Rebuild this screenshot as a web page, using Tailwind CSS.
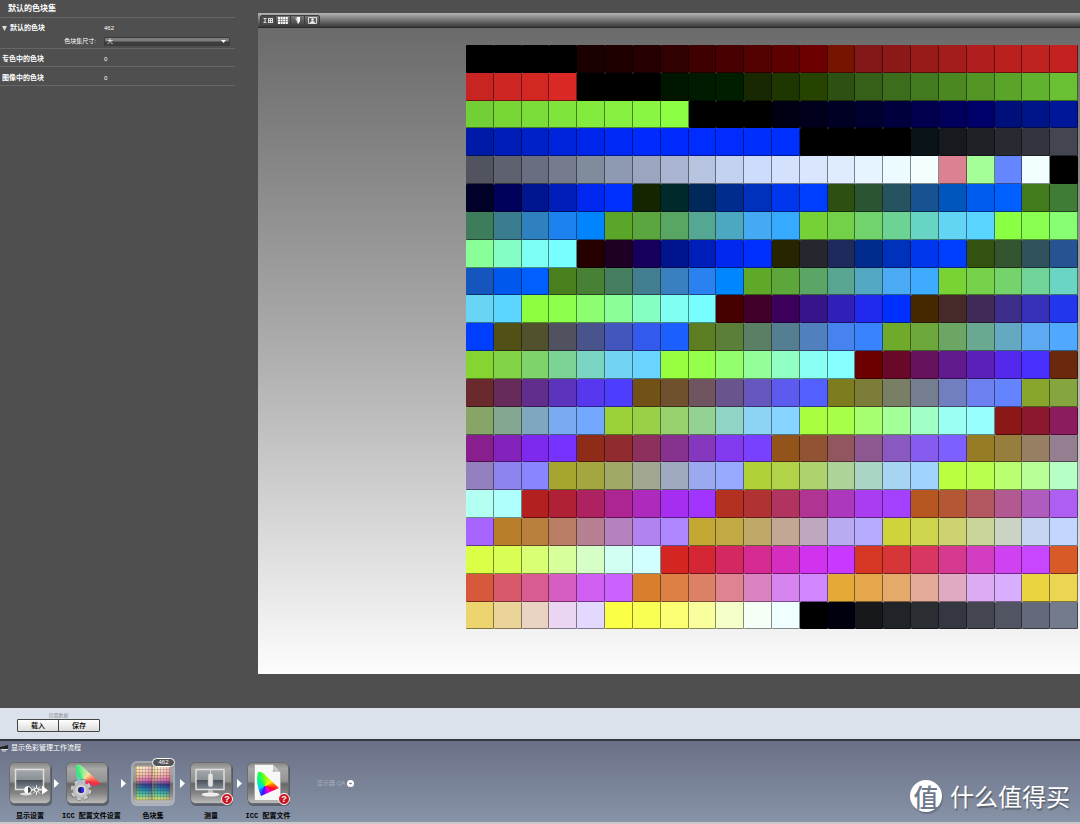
<!DOCTYPE html>
<html lang="zh-CN">
<head>
<meta charset="utf-8">
<meta name="viewport" content="width=device-width, initial-scale=1">
<title>默认的色块集</title>
<script src="https://cdn.jsdelivr.net/npm/@tailwindcss/browser@4"></script>
</head>
<body class="flex min-h-screen flex-col bg-[#4f4f4f] font-['Liberation_Sans','Noto_Sans_CJK_SC',sans-serif] text-[7px] leading-[10px] text-white">

<main class="flex flex-1 items-start">
  <aside class="w-[258px] shrink-0 pr-[23px]">
    <h1 class="border-b border-[#666] pt-1 pb-[3px] pl-2 text-[8px] leading-[10px] font-bold">默认的色块集</h1>
    <section class="border-b border-[#666] pt-[5px] pb-[2px]">
      <div class="flex items-center">
        <button class="flex w-[104px] items-center gap-[3px] pl-[2px] font-bold" aria-expanded="true">
          <svg class="size-[5px]" viewBox="0 0 5 5"><path d="M0 0h5L2.500 5z" fill="#ddd"/></svg>默认的色块
        </button>
        <span class="text-[6px]">462</span>
      </div>
      <div class="mt-[3px] flex items-center">
        <label for="size" class="w-[104px] pr-2 text-right text-[6px]">色块集尺寸:</label>
        <div class="relative mr-[5px] flex-1">
          <select id="size" class="block h-[9px] w-full appearance-none rounded-[1px] border border-[#3a3a3a] bg-linear-to-b from-[#7d7d7d] from-40% to-[#3d3d3d] to-60% pl-[2px] text-[6px] leading-[7px] text-white"><option>大</option></select>
          <svg class="pointer-events-none absolute top-[3px] right-1 h-[3px] w-[5px]" viewBox="0 0 5 3"><path d="M0 0h5L2.500 3z" fill="#fff"/></svg>
        </div>
      </div>
    </section>
    <section class="flex items-center border-b border-[#666] pt-[5px] pb-[2px]">
      <h2 class="w-[104px] pl-[2px] font-bold">专色中的色块</h2><span class="text-[6px]">0</span>
    </section>
    <section class="flex items-center border-b border-[#666] pt-[6px] pb-[2px]">
      <h2 class="w-[104px] pl-[2px] font-bold">图像中的色块</h2><span class="text-[6px]">0</span>
    </section>
  </aside>

  <section class="min-w-0 flex-1 pt-[13px] pb-[34px]">
    <div class="flex h-[15px] items-center border-b border-[#292929] bg-linear-to-b from-[#b5b5b5] via-[#747474] to-[#393939] pl-[2px]" role="toolbar">
      <div class="flex h-[11px] rounded-[2px] border border-[#3c3c3c] bg-linear-to-b from-[#777] to-[#444]">
        <button aria-label="数值视图" class="flex w-[14px] items-center justify-center bg-[#4a4a4a]"><svg class="h-[7px] w-[11px]" viewBox="0 0 11 7" fill="none" stroke="#ddd"><path d="M0.500 1.500h3M2 1.500v4M0.500 5.500h3M5.500 1v5M7.500 1v5M9.500 1v5M5 1.500h5M5 3.500h5M5 5.500h5"/></svg></button>
        <button aria-label="网格视图" class="flex w-[15px] items-center justify-center border-l border-[#3c3c3c]"><svg class="h-[7px] w-[10px]" viewBox="0 0 10 7" fill="#fff"><path d="M0 0h2v2H0zM2.600 0h2v2h-2zM5.200 0h2v2h-2zM7.800 0h2v2h-2zM0 2.500h2v2H0zM2.600 2.500h2v2h-2zM5.200 2.500h2v2h-2zM7.800 2.500h2v2h-2zM0 5h2v2H0zM2.600 5h2v2h-2zM5.200 5h2v2h-2zM7.800 5h2v2h-2z"/></svg></button>
        <button aria-label="立体视图" class="flex w-[14px] items-center justify-center border-l border-[#3c3c3c]"><svg class="h-[7px] w-[6px]" viewBox="0 0 6 7"><path d="M0 1l3-1 2 1v3L3 7z" fill="#bbb"/><path d="M2 0h3v4L3 7z" fill="#fff"/></svg></button>
        <button aria-label="图像视图" class="flex w-[15px] items-center justify-center border-l border-[#3c3c3c]"><svg class="h-[7px] w-[9px]" viewBox="0 0 9 7"><path d="M.500.500h8v6h-8z" fill="none" stroke="#ddd"/><circle cx="4.500" cy="2.500" r="1.300" fill="#eee"/><path d="M2 6q0-2 2.500-2T7 6z" fill="#eee"/></svg></button>
      </div>
    </div>
    <div class="bg-linear-to-b from-[#6b6b6b] via-[#adadad] to-[#fdfdfd] pt-[17px] pr-[2px] pb-[45px] pl-[208px]">
      <div id="patches" class="grid grid-cols-[repeat(22,minmax(0,1fr))]"></div>
    </div>
  </section>
</main>

<section class="flex h-[31px] items-start bg-[#dce2eb] pt-1 pl-[17px]">
  <div class="w-[83px]">
    <p class="text-center text-[5px] leading-[7px] text-[#8a8f98]">页面数据</p>
    <div class="flex rounded-[1px] border border-[#444] bg-linear-to-b from-white to-[#dcdcdc] text-black">
      <button class="flex-1 border-r border-[#444] leading-[11px] font-medium">载入</button>
      <button class="flex-1 leading-[11px] font-medium">保存</button>
    </div>
  </div>
</section>

<footer class="flex h-[85px] items-start justify-between border-t-2 border-b-2 border-t-[#353840] border-b-[#c9c9c9] bg-linear-to-b from-[#6a7186] to-[#8793a7]">
  <div>
    <h2 class="flex items-center gap-[2px] pt-[2px]">
      <svg class="h-[8px] w-[9px]" viewBox="0 0 9 8"><path d="M0 1h8v4H0z" fill="#20242c"/><path d="M0 1h8L0 3z" fill="#707885"/><path d="M1 5.500h7M2 7h4" stroke="#ddd"/></svg>显示色彩管理工作流程
    </h2>
    <nav class="mt-[9px] flex items-start pl-[9px] text-center font-['Liberation_Mono','Noto_Sans_CJK_SC',monospace] leading-[10px] font-bold whitespace-nowrap text-black">
      <a href="#display" class="flex w-[42px] flex-col gap-[7px]">
        <svg class="size-[42px] overflow-visible" viewBox="0 0 42 42">
          <defs>
            <linearGradient id="tile" x2="0" y2="1"><stop stop-color="#858585"/><stop offset=".15" stop-color="#a6a6a6"/><stop offset=".46" stop-color="#939393"/><stop offset=".52" stop-color="#686868"/><stop offset=".75" stop-color="#848484"/><stop offset="1" stop-color="#bebebe"/></linearGradient>
            <linearGradient id="screen" x2="0" y2="1"><stop stop-color="#a4a8ac"/><stop offset=".5" stop-color="#8b9196"/><stop offset=".55" stop-color="#4b525b"/><stop offset="1" stop-color="#858d96"/></linearGradient>
          </defs>
          <rect x="1" y="2" width="42" height="42" rx="5" fill="#000" opacity=".3"/>
          <rect x=".500" y=".500" width="41" height="41" rx="5" fill="url(#tile)" stroke="#6c6c6c"/>
          <rect x="6.500" y="7.500" width="28" height="20" fill="url(#screen)" stroke="#dedede" stroke-width="1.500"/>
          <ellipse cx="17" cy="32" rx="6" ry="1.500" fill="#ddd"/>
          <circle cx="19" cy="28" r="3.500" fill="#444" stroke="#fff"/><path d="M19 24.500a3.500 3.500 0 0 0 0 7z" fill="#fff"/>
          <path d="M27.500 23v10M22.500 28h10M24 24.500l7 7M31 24.500l-7 7" stroke="#fff" stroke-width=".800"/><circle cx="27.500" cy="28" r="2" fill="#888" stroke="#fff"/>
          <path d="M33 23.500l6 5-6 4z" fill="#fff"/>
        </svg>显示设置</a>
      <span class="flex h-[42px] w-[11px] items-center justify-center"><svg class="h-[9px] w-[5px]" viewBox="0 0 5 9"><path d="M0 0l5 4.500L0 9z" fill="#fff"/></svg></span>
      <a href="#profile-settings" class="flex w-[58px] flex-col gap-[7px]">
        <svg class="ml-1 size-[42px] overflow-visible" viewBox="0 0 42 42">
          <defs><clipPath id="gamutback"><path d="M10 3Q14 1 18 6L35 22L14 27Q9 15 10 3z"/></clipPath></defs>
          <rect x="1" y="2" width="42" height="42" rx="5" fill="#000" opacity=".3"/>
          <rect x=".500" y=".500" width="41" height="41" rx="5" fill="url(#tile)" stroke="#6c6c6c"/>
          <foreignObject x="0" y="0" width="42" height="42" clip-path="url(#gamutback)"><div class="size-[42px] bg-[conic-gradient(from_0deg_at_17px_19px,#9e9_0deg,#fd9_40deg,#f86_70deg,#f03040_100deg,#f0308a_130deg,#80c_180deg,#8cf_260deg,#4ed8a0_310deg,#3ee87a_335deg,#9e9_360deg)]"></div></foreignObject>
          <circle cx="15" cy="28" r="9" fill="none" stroke="#555" stroke-width="4" stroke-dasharray="4.070 3"/>
          <circle cx="15" cy="28" r="9" fill="none" stroke="#c9c9c9" stroke-width="3" stroke-dasharray="4.070 3"/>
          <circle cx="15" cy="28" r="8" fill="#bcbcbc"/><circle cx="15" cy="28" r="5.500" fill="#d2d2d2"/><circle cx="15" cy="28" r="3" fill="#172054"/><path d="M15 25a3 3 0 0 1 0 6z" fill="#2d28f0"/>
        </svg>ICC 配置文件设置</a>
      <span class="flex h-[42px] w-3 items-center justify-start pl-[1px]"><svg class="h-[9px] w-[5px]" viewBox="0 0 5 9"><path d="M0 0l5 4.500L0 9z" fill="#fff"/></svg></span>
      <a href="#patchset" class="relative flex w-[42px] flex-col gap-[7px]" aria-current="page">
        <svg class="size-[42px] overflow-visible" viewBox="0 0 42 42">
          <defs>
            <linearGradient id="chart" x2="0" y2="1"><stop stop-color="#fff0d2"/><stop offset=".25" stop-color="#f7b9a8"/><stop offset=".42" stop-color="#d063a4"/><stop offset=".55" stop-color="#142882"/><stop offset=".68" stop-color="#0873a5"/><stop offset=".82" stop-color="#31b59a"/><stop offset="1" stop-color="#e6e66b"/></linearGradient>
            <linearGradient id="chartx"><stop stop-color="#ff0" stop-opacity=".25"/><stop offset=".5" stop-color="#fff" stop-opacity=".1"/><stop offset="1" stop-color="#d04" stop-opacity=".2"/></linearGradient>
            <pattern id="mesh" width="3" height="3" patternUnits="userSpaceOnUse"><path d="M0 .500h3M.500 0v3" stroke="#334" stroke-opacity=".22"/></pattern>
          </defs>
          <rect x="-1" y="-1" width="44" height="45" rx="6" fill="#d5d8e0" opacity=".5"/>
          <rect x=".500" y=".500" width="41" height="41" rx="5" fill="url(#tile)" stroke="#aaa"/>
          <g transform="translate(4 4)"><rect width="16" height="34" fill="url(#chart)"/><rect width="16" height="34" fill="url(#chartx)"/><rect x="17" width="17" height="34" fill="url(#chart)"/><rect x="17" width="17" height="34" fill="url(#chartx)"/><rect width="34" height="34" fill="url(#mesh)"/></g>
        </svg>色块集
        <span class="absolute -top-1 left-5 w-[23px] rounded-full border border-white bg-[#555] text-center font-['Liberation_Sans'] text-[6px] leading-[7px] font-normal text-white">462</span>
      </a>
      <span class="flex h-[42px] w-4 items-center justify-center"><svg class="h-[9px] w-[5px]" viewBox="0 0 5 9"><path d="M0 0l5 4.500L0 9z" fill="#fff"/></svg></span>
      <a href="#measure" class="relative flex w-[42px] flex-col gap-[7px]">
        <svg class="size-[42px] overflow-visible" viewBox="0 0 42 42">
          <rect x="1" y="2" width="42" height="42" rx="5" fill="#000" opacity=".3"/>
          <rect x=".500" y=".500" width="41" height="41" rx="5" fill="url(#tile)" stroke="#6c6c6c"/>
          <rect x="6" y="7.500" width="28" height="20" fill="url(#screen)" stroke="#dedede" stroke-width="1.500"/>
          <path d="M20.500 7v5" stroke="#ddd"/><rect x="18" y="11" width="5" height="14" rx="2.500" fill="#e4e4e4" stroke="#999" stroke-width=".500"/>
          <path d="M18 28h5v3h-5z" fill="#bbb"/><ellipse cx="20.500" cy="32.500" rx="9" ry="2" fill="#eee"/>
        </svg>测量
        <span class="absolute top-[31px] left-[31px] size-3 rounded-full border border-white bg-[#c71622] font-['Liberation_Sans'] text-[9px] leading-[10px] text-white">?</span>
      </a>
      <span class="flex h-[42px] w-[15px] items-center justify-center"><svg class="h-[9px] w-[5px]" viewBox="0 0 5 9"><path d="M0 0l5 4.500L0 9z" fill="#fff"/></svg></span>
      <a href="#profile" class="relative flex w-[42px] flex-col items-center gap-[7px]">
        <svg class="size-[42px] overflow-visible" viewBox="0 0 42 42">
          <defs><clipPath id="gamutclip"><path d="M11 10Q15 9 19 14L32 26L14 34Q8 20 11 10z"/></clipPath></defs>
          <rect x="1" y="2" width="42" height="42" rx="5" fill="#000" opacity=".3"/>
          <rect x=".500" y=".500" width="41" height="41" rx="5" fill="url(#tile)" stroke="#6c6c6c"/>
          <path d="M7.500 2.500h19l7 7v29h-26z" fill="#f7f7f7" stroke="#999" stroke-width=".500"/><path d="M26.500 2.500q1 5-.500 7 4-1 7.500 0z" fill="#ccc" stroke="#888" stroke-width=".500"/>
          <foreignObject x="0" y="0" width="42" height="42" clip-path="url(#gamutclip)"><div class="size-[42px] bg-[conic-gradient(from_0deg_at_18px_24px,#8f0_0deg,#fe0_55deg,#f60_85deg,#f03_110deg,#f0c_145deg,#90f_175deg,#22f_200deg,#0cf_250deg,#0e9_300deg,#2f5_335deg,#8f0_360deg)]"></div></foreignObject>
        </svg><span>ICC 配置文件</span>
        <span class="absolute top-[31px] left-[31px] size-3 rounded-full border border-white bg-[#c71622] font-['Liberation_Sans'] text-[9px] leading-[10px] text-white">?</span>
      </a>
      <button class="ml-7 flex h-[42px] items-center gap-[2px] font-['Liberation_Sans','Noto_Sans_CJK_SC',sans-serif] text-[6px] font-normal text-[#a5adbb]">显示器 QA
        <svg class="size-[7px]" viewBox="0 0 7 7"><circle cx="3.500" cy="3.500" r="3.500" fill="#fff"/><path d="M2 3.500h3M3.500 2.500v2" stroke="#889"/></svg>
      </button>
    </nav>
  </div>
  <div class="flex items-center gap-2 pt-[39px] pr-[10px] font-['Noto_Sans_CJK_SC',sans-serif] text-2xl leading-8 whitespace-nowrap text-shadow-[1px_2px_1px_rgb(0_0_0/0.3)]">
    <span class="flex size-8 items-center justify-center rounded-full bg-white text-[25px] font-medium text-[#707a8d] shadow-[1px_2px_1px_rgb(0_0_0/0.2)] text-shadow-none">值</span>
    <span>什么值得买</span>
  </div>
</footer>

<script>
// One string per chart row, 22 hex colours each.
const rows = [
"000 000 000 000 1a0000 1f0000 260000 310000 3e0000 480000 520000 5e0000 6c0000 771400 811716 8c1917 981b19 a31d1b b01f1d b9201e bf211f c42220",
"c82522 ce2623 d32724 d92826 000 000 000 001600 001b00 001f00 182800 1e3600 264400 2d5113 365f18 3c6d1c 447a1f 4c8822 539626 5aa42a 61b22f 69c033",
"73cf36 78d637 7bdd39 7fe43b 83eb3e 86f140 89f742 8cff45 000 000 000 000014 00001c 000024 000031 00003e 00004f 00005c 00006b 00107a 001489 001799",
"001aa8 001db9 0020ca 0023dc 0026ec 0029f8 002bff 002bff 002cff 002cff 002eff 0030ff 000 000 000 000 0a1318 18191e 1f2126 282a31 33353e 434650",
"51535f 5d6170 696e80 777b8e 808b9c 8e9ab2 9ba5bf a8b4d0 b7c4df c4d2f1 cddbfd d4e1fd d9e6fe dfecfe e5f4ff ecfbff f3ffff dc8191 a4ff99 6487ff f1ffff 000",
"000029 00005d 00158e 001eba 0027f0 0030ff 142600 00292c 00285a 002c90 0031bc 0037ee 003eff 2b5012 2a5432 25535f 175390 0056bd 005cef 0060ff 427a1c 3f7d36",
"3e7d5b 397d8e 2f80bf 1c82f0 0085ff 5ba629 5ba63e 59a664 54a792 4ca8c0 43aaf3 35aaff 75d135 72d148 70d36b 6cd395 68d4c3 61d5f3 59d5ff 8bff42 89ff4f 88ff72",
"88ff99 83ffc6 7dfff4 77ffff 240000 1e0025 17005d 00148d 001eba 0028ef 0030ff 262500 26272e 1f2a5c 002c90 0031bb 0037ee 003eff 33510f 345430 30525d 265391",
"1556be 0059ef 005fff 49801d 488036 447e5e 427e90 3980c0 2a82f1 0087ff 60a828 5da63b 5ba666 58a692 52a8c2 4aaaf3 3eabff 79d334 76d24a 74d36b 70d398 6bd5c3",
"67d5f3 5cd5ff 8dff40 8cff4d 8bff71 8aff99 86ffc5 7ffff2 77ffff 470000 410029 3c005d 38148b 311fb9 2027ef 0030ff 462800 462929 422a58 3d2e8c 352fba 2237ed",
"003eff 515016 51512e 50525f 4a548c 4256bd 3359ed 1b60ff 5d7d22 5b7f38 5a7f64 567e92 5180bf 4783ee 3983ff 70aa2a 6da83d 6ca665 69a891 64a8c1 5eaaf2 51a9ff",
"84d432 82d446 7fd36b 7cd396 7ad6c3 73d3f3 6bd3ff 97ff40 95ff4c 94ff6e 92ff98 90ffc4 8afff4 85ffff 6b0000 6a0829 67125d 611a8d 5b20b9 5429ed 4a30ff 6c280c",
"6a292d 662a5b 622e8e 5c33bd 5738ef 4d3dff 715115 70512e 705460 6a548d 6657be 5d5bef 535fff 7d7d20 7b7d38 797f64 757e90 717ebf 6c81ef 6483ff 88a62b 85a63f",
"86a566 84a792 7fa8c0 7aaaf2 72a9ff 9ad136 98d048 97d16e 93d195 8fd4c4 8bd4f3 86d4ff a9ff3f a7ff4a a5ff70 a3ff97 9fffc5 9bfff4 98ffff 8b1717 8b182f 8b1c5d",
"891f8f 8323bc 7e2aee 7832ff 8e2c17 902c30 8e305d 88328f 8537bd 813aef 7a40ff 92541b 925334 915660 8d588f 8959c0 855cef 7e5fff 967d25 967e3c 977f64 947f91",
"9380bf 8d84ef 8984ff a6a62e a4a63f a2a867 a0a793 9fa9c0 9ba9f1 96abff b1d236 b0d349 aed26d add398 aad4c3 a7d4f2 a0d4ff bbff41 bbff4e b9ff71 b8ff98 b6ffc5",
"b4fff3 b0ffff b2201f b12135 af2261 ad2592 ac2abc a62ef1 a135ff b23120 b13233 b13460 b03592 ac38bd a93def a341ff b65621 b45734 b25660 b15990 b05cbf ae5ff1",
"a864ff b97e2a b87f3e b87f66 b68092 b581bf b183f1 ae86ff c3a833 c1a944 c0a968 c2a794 bea8c0 baaaf2 b5acff cfd43c cdd54e cdd370 c9d599 cbd3c5 c6d6f2 c2d6ff",
"dbff46 daff54 d9ff74 d7ff9c d6ffc7 d2fff4 d1ffff d42522 d52636 d42863 d62a93 d52dbf d032f0 c938ff d63724 d63638 d73761 d63a90 d33dc1 cf41f1 c846ff d75a27",
"d7583a d8596a d85b91 d65dc1 d05ff1 cb62ff d97e2d dc8045 dc8165 df8292 da83c1 d685f0 cf86ff e4a937 e4a84b e3aa6c e3aa99 e1aac3 ddabf1 d9aeff ecd440 edd554",
"ecd46f ebd49a ead3c3 ead6f2 e3d9ff fbff46 faff54 faff73 f8ff9c f5ffc9 f5fff6 efffff 000 00000f 17181b 202327 2a2d32 343640 434650 515563 646a7b 747b8d"
];
const chart = document.getElementById("patches");
for (const row of rows) for (const colour of row.split(" ")) {
  const patch = document.createElement("div");
  patch.className = "aspect-square rounded-[1px] border-r border-b border-black/45";
  patch.style.backgroundColor = "#" + colour;
  chart.append(patch);
}
</script>
</body>
</html>
